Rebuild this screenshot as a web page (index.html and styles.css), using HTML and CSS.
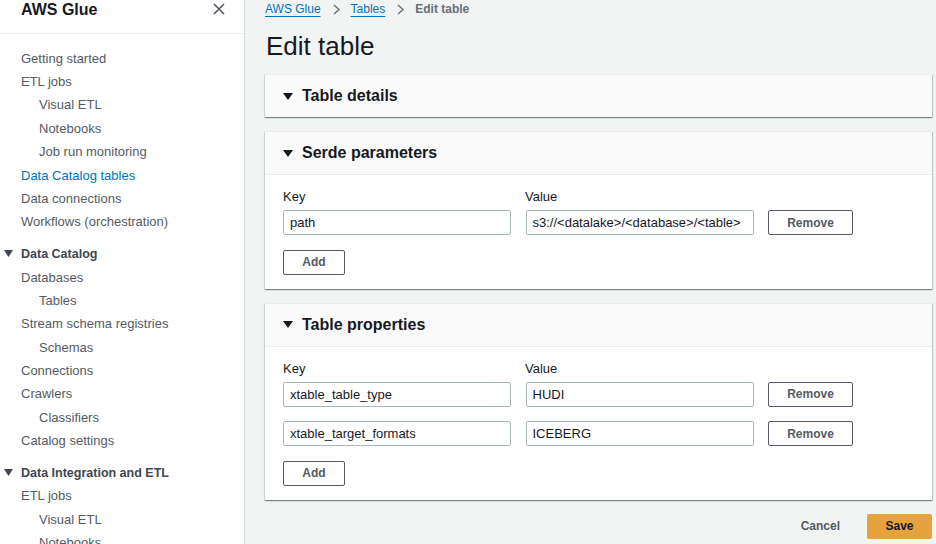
FILE: index.html
```html
<!DOCTYPE html>
<html lang="en">
<head>
<meta charset="utf-8">
<title>Edit table</title>
<link rel="stylesheet" href="styles.css">
</head>
<body>
<div class="app">
  <nav class="side">
    <div class="side-head">
      <span class="brand">AWS Glue</span>
      <svg class="close" width="12" height="12" viewBox="0 0 12 12"><path d="M1 1 L11 11 M11 1 L1 11" stroke="#545b64" stroke-width="1.6" fill="none"/></svg>
    </div>
    <ul class="nav first">
      <li class="l1">Getting started</li>
      <li class="l1">ETL jobs</li>
      <li class="l2">Visual ETL</li>
      <li class="l2">Notebooks</li>
      <li class="l2">Job run monitoring</li>
      <li class="l1 active">Data Catalog tables</li>
      <li class="l1">Data connections</li>
      <li class="l1">Workflows (orchestration)</li>
    </ul>
    <div class="sec">
      <div class="sec-title"><svg class="tri" width="9" height="7" viewBox="0 0 9 7"><path d="M0 0 H9 L4.5 7 Z" fill="#414750"/></svg>Data Catalog</div>
      <ul class="nav">
        <li class="l1">Databases</li>
        <li class="l2">Tables</li>
        <li class="l1">Stream schema registries</li>
        <li class="l2">Schemas</li>
        <li class="l1">Connections</li>
        <li class="l1">Crawlers</li>
        <li class="l2">Classifiers</li>
        <li class="l1">Catalog settings</li>
      </ul>
    </div>
    <div class="sec">
      <div class="sec-title"><svg class="tri" width="9" height="7" viewBox="0 0 9 7"><path d="M0 0 H9 L4.5 7 Z" fill="#414750"/></svg>Data Integration and ETL</div>
      <ul class="nav">
        <li class="l1">ETL jobs</li>
        <li class="l2">Visual ETL</li>
        <li class="l2">Notebooks</li>
      </ul>
    </div>
  </nav>

  <main class="main">
    <div class="crumbs">
      <a class="crumb-link">AWS Glue</a>
      <svg class="chev" width="7" height="11" viewBox="0 0 7 11"><path d="M1 1 L6 5.5 L1 10" stroke="#687078" stroke-width="1.4" fill="none"/></svg>
      <a class="crumb-link">Tables</a>
      <svg class="chev" width="7" height="11" viewBox="0 0 7 11"><path d="M1 1 L6 5.5 L1 10" stroke="#687078" stroke-width="1.4" fill="none"/></svg>
      <span class="crumb-cur">Edit table</span>
    </div>
    <h1 class="title">Edit table</h1>

    <section class="panel">
      <div class="panel-head solo">
        <svg class="ptri" width="10" height="7" viewBox="0 0 10 7"><path d="M0 0 H10 L5 7 Z" fill="#16191f"/></svg>
        <h2>Table details</h2>
      </div>
    </section>

    <section class="panel">
      <div class="panel-head">
        <svg class="ptri" width="10" height="7" viewBox="0 0 10 7"><path d="M0 0 H10 L5 7 Z" fill="#16191f"/></svg>
        <h2>Serde parameters</h2>
      </div>
      <div class="panel-body">
        <div class="labels"><span>Key</span><span>Value</span></div>
        <div class="kv">
          <div class="field">path</div>
          <div class="field">s3://&lt;datalake&gt;/&lt;database&gt;/&lt;table&gt;</div>
          <button class="btn remove">Remove</button>
        </div>
        <button class="btn add">Add</button>
      </div>
    </section>

    <section class="panel">
      <div class="panel-head">
        <svg class="ptri" width="10" height="7" viewBox="0 0 10 7"><path d="M0 0 H10 L5 7 Z" fill="#16191f"/></svg>
        <h2>Table properties</h2>
      </div>
      <div class="panel-body">
        <div class="labels"><span>Key</span><span>Value</span></div>
        <div class="kv">
          <div class="field">xtable_table_type</div>
          <div class="field">HUDI</div>
          <button class="btn remove">Remove</button>
        </div>
        <div class="kv">
          <div class="field">xtable_target_formats</div>
          <div class="field">ICEBERG</div>
          <button class="btn remove">Remove</button>
        </div>
        <button class="btn add">Add</button>
      </div>
    </section>

    <div class="actions">
      <button class="cancel">Cancel</button>
      <button class="save">Save</button>
    </div>
  </main>
</div>
</body>
</html>
```

FILE: styles.css
```css
* { box-sizing: border-box; }
html, body { margin: 0; padding: 0; }
body {
  font-family: "Liberation Sans", Arial, sans-serif;
  font-size: 13px;
  color: #16191f;
  width: 936px;
  height: 544px;
  overflow: hidden;
}
.app { display: flex; height: 544px; }

/* sidebar */
.side {
  width: 245px;
  flex: none;
  background: #fff;
  border-right: 1px solid #d5dbdb;
  overflow: hidden;
}
.side-head {
  height: 34px;
  border-bottom: 1px solid #eaeded;
  display: flex;
  justify-content: space-between;
  align-items: flex-start;
  padding: 0 19px 0 21px;
}
.brand { font-weight: bold; font-size: 16px; line-height: 20px; color: #16191f; }
.close { margin-top: 3px; }
.nav { list-style: none; margin: 0; padding: 0; }
.nav.first { padding-top: 12.7px; }
.nav li { height: 23.4px; line-height: 23.4px; color: #545b64; white-space: nowrap; }
.nav .l1 { padding-left: 21px; }
.nav .l2 { padding-left: 39px; }
.nav .active { color: #0073bb; }
.sec { margin-top: 8.3px; }
.sec-title {
  display: flex; align-items: center;
  height: 23.4px;
  padding-left: 4px;
  font-weight: bold;
  font-size: 12.5px;
  color: #414750;
}
.tri { margin-right: 8px; }

/* main */
.main {
  flex: 1;
  background: #f2f3f3;
  padding: 0 4px 0 20px;
  overflow: hidden;
}
.crumbs {
  display: flex; align-items: center;
  height: 18px;
  font-size: 12px;
}
.crumb-link { color: #0073bb; text-decoration: underline; text-underline-offset: 3px; }
.chev { margin: 0 11px 0 12px; }
.crumb-cur { font-weight: bold; color: #687078; }
.title {
  margin: 12px 0 12px 1px;
  font-size: 26px;
  line-height: 32px;
  font-weight: normal;
  color: #16191f;
}

.panel {
  background: #fff;
  border-top: 1px solid #eaeded;
  box-shadow: 0 1px 1px 0 rgba(0, 28, 36, 0.35), 1px 1px 1px 0 rgba(0, 28, 36, 0.15), -1px 1px 1px 0 rgba(0, 28, 36, 0.1);
  margin-bottom: 14px;
}
.panel-head {
  display: flex; align-items: center;
  height: 43px;
  background: #fafafa;
  border-bottom: 1px solid #eaeded;
  padding-left: 18px;
}
.panel-head.solo { height: 42px; border-bottom: none; }
.ptri { margin-right: 9px; }
.panel-head h2 { margin: 0; font-size: 16px; font-weight: bold; color: #16191f; }
.panel-body { padding: 12px 18px 14px; }
.labels {
  display: grid;
  grid-template-columns: 228px 228px;
  column-gap: 14px;
  line-height: 20px;
  margin-bottom: 3px;
  color: #16191f;
}
.kv {
  display: grid;
  grid-template-columns: 228px 228px 85px;
  column-gap: 14.5px;
  margin-bottom: 14.5px;
}
.field {
  height: 25px;
  line-height: 23px;
  border: 1px solid #aab7b8;
  border-radius: 2px;
  padding: 0 6px;
  color: #16191f;
  background: #fff;
  white-space: nowrap;
  overflow: hidden;
}
.btn {
  height: 25px;
  border: 1px solid #545b64;
  border-radius: 2px;
  background: #fff;
  color: #545b64;
  font-family: inherit;
  font-weight: bold;
  font-size: 12px;
  padding: 0;
}
.add { width: 62px; display: block; }
.actions {
  display: flex; justify-content: flex-end; align-items: center;
  gap: 27px;
}
.cancel {
  border: none; background: none; padding: 0;
  font-family: inherit; font-weight: bold; font-size: 12px; color: #545b64;
}
.save {
  width: 65px; height: 25px;
  border: none; border-radius: 2px;
  background: #e6a23c;
  color: #16191f;
  font-family: inherit; font-weight: bold; font-size: 12px;
}
```
